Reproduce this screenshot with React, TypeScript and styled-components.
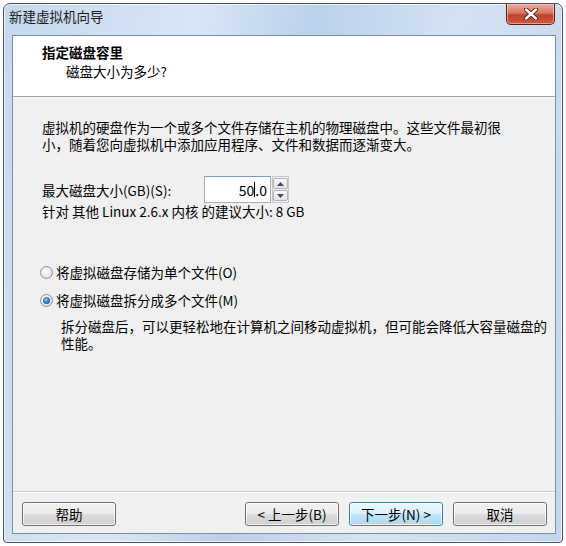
import React from "react";
import styled, { createGlobalStyle } from "styled-components";

const GlobalStyle = createGlobalStyle`
  html, body {
    margin: 0;
    padding: 0;
    background: #ffffff;
  }
  body {
    font-family: "Noto Sans CJK SC", "Liberation Sans", sans-serif;
    font-size: 13.5px;
    color: #000;
  }
`;

const Page = styled.div`
  width: 566px;
  height: 546px;
  padding: 3px;
  box-sizing: border-box;
`;

const Window = styled.div`
  width: 560px;
  height: 540px;
  box-sizing: border-box;
  border: 1px solid #4a5058;
  border-radius: 7px 7px 4px 4px;
  background: linear-gradient(
    100deg,
    #c4d8ee 0%,
    #d9e6f5 30%,
    #bcd0ea 48%,
    #d4e2f3 70%,
    #c2d6ee 100%
  );
  box-shadow: inset 0 0 0 1px rgba(255, 255, 255, 0.7);
  display: flex;
  flex-direction: column;
  padding: 0 6px 8px 8px;
`;

const TitleBar = styled.div`
  height: 31px;
  display: flex;
  align-items: flex-start;
  justify-content: space-between;
`;

const TitleText = styled.div`
  padding-top: 3px;
  margin-left: -3px;
  line-height: 18px;
  font-size: 13.5px;
  color: #1a1a1a;
`;

const CloseButton = styled.div`
  width: 49px;
  height: 21px;
  margin-right: 1px;
  box-sizing: border-box;
  border: 1px solid #5c1f17;
  border-top: none;
  border-radius: 0 0 5px 5px;
  background: linear-gradient(
    180deg,
    #e9a99b 0%,
    #d97764 45%,
    #c0402c 55%,
    #cc5a3e 100%
  );
  box-shadow: inset 0 0 0 1px rgba(255, 220, 210, 0.55);
  display: flex;
  align-items: center;
  justify-content: center;
`;

const Client = styled.div`
  flex: 1;
  display: flex;
  flex-direction: column;
  border: 1px solid #7b8da2;
  background: #f0f0f0;
`;

const Header = styled.div`
  height: 61px;
  box-sizing: border-box;
  background: #ffffff;
  border-bottom: 1px solid #a0a0a0;
  padding: 8px 0 0 29px;
`;

const HeaderTitle = styled.div`
  font-weight: bold;
  line-height: 17px;
`;

const HeaderSub = styled.div`
  margin-top: 2px;
  padding-left: 24px;
  line-height: 17px;
`;

const Body = styled.div`
  flex: 1;
  padding: 21px 0 0 29px;
  border-top: 1px solid #ffffff;
`;

const Paragraph = styled.div`
  line-height: 17px;
  white-space: nowrap;
`;

const SizeRow = styled.div`
  margin-top: 23px;
  display: flex;
  align-items: center;
  height: 27px;
`;

const Label = styled.div`
  width: 162px;
`;

const SpinBox = styled.div`
  display: flex;
  height: 27px;
`;

const SpinInput = styled.div`
  width: 67px;
  box-sizing: border-box;
  border: 1px solid #abadb3;
  border-top-color: #7d9ac0;
  background: #ffffff;
  display: flex;
  align-items: center;
  justify-content: flex-end;
  padding-right: 3px;
  font-size: 14px;
`;

const Caret = styled.span`
  display: inline-block;
  width: 1px;
  height: 15px;
  background: #000;
  vertical-align: middle;
`;

const SpinButtons = styled.div`
  width: 17px;
  margin-left: 1px;
  display: flex;
  flex-direction: column;
  gap: 1px;
  padding: 1px 0;
  box-sizing: border-box;
  border: 1px solid #c9c9c9;
  background: #f0f0f0;
`;

const SpinButton = styled.div`
  flex: 1;
  border: 1px solid #b5b5b5;
  border-radius: 2px;
  background: linear-gradient(180deg, #f8f8f8 0%, #e6e6e6 100%);
  display: flex;
  align-items: center;
  justify-content: center;
`;

const Hint = styled.div`
  line-height: 17px;
`;

const RadioRow = styled.div<{ $gap: number }>`
  margin-top: ${(p) => p.$gap}px;
  display: flex;
  align-items: center;
  gap: 3px;
  line-height: 17px;
  margin-left: -2px;
`;

const RadioCircle = styled.span<{ $checked?: boolean }>`
  width: 13px;
  height: 13px;
  box-sizing: border-box;
  border-radius: 50%;
  border: 1px solid #8f8f8f;
  background: radial-gradient(circle at 40% 35%, #ffffff 0%, #e2e2e2 70%, #cfcfcf 100%);
  display: flex;
  align-items: center;
  justify-content: center;

  &::after {
    content: "";
    display: ${(p) => (p.$checked ? "block" : "none")};
    width: 7px;
    height: 7px;
    border-radius: 50%;
    background: radial-gradient(circle at 45% 40%, #8fd0ff 0%, #2f7fd1 45%, #0c3f84 100%);
  }
`;

const RadioNote = styled.div`
  margin-top: 9px;
  padding-left: 19px;
  line-height: 17px;
  white-space: nowrap;
`;

const Footer = styled.div`
  border-top: 1px solid #c8c8c8;
  box-shadow: inset 0 1px 0 #ffffff;
  padding: 10px 8px 7px 9px;
  display: flex;
  align-items: center;
`;

const Spacer = styled.div`
  flex: 1;
`;

const Button = styled.button<{ $default?: boolean }>`
  width: 94px;
  height: 24px;
  box-sizing: border-box;
  margin-left: ${(p) => (p.$default ? "10px" : "0")};
  font-family: inherit;
  font-size: 13.5px;
  color: #000;
  border-radius: 3px;
  border: 1px solid ${(p) => (p.$default ? "#3c7fb1" : "#707070")};
  background: ${(p) =>
    p.$default
      ? "linear-gradient(180deg, #eaf6fd 0%, #d9f0fc 50%, #bee6fd 51%, #a7d9f5 100%)"
      : "linear-gradient(180deg, #f2f2f2 0%, #ebebeb 50%, #dddddd 51%, #cfcfcf 100%)"};
  box-shadow: inset 0 0 0 1px rgba(255, 255, 255, 0.75);
  padding: 0;
  line-height: 20px;
`;

const ButtonGap = styled.div<{ $w: number }>`
  width: ${(p) => p.$w}px;
`;

const CloseIcon = () => (
  <svg width="14" height="12" viewBox="0 0 14 12">
    <path
      d="M2 1.5 L12 10.5 M12 1.5 L2 10.5"
      stroke="#4a1410"
      strokeWidth="4.2"
      strokeLinecap="round"
    />
    <path
      d="M2 1.5 L12 10.5 M12 1.5 L2 10.5"
      stroke="#ffffff"
      strokeWidth="2.4"
      strokeLinecap="round"
    />
  </svg>
);

const Arrow = ({ up }: { up?: boolean }) => (
  <svg width="7" height="4" viewBox="0 0 7 4">
    <path d={up ? "M0 4 L3.5 0 L7 4 Z" : "M0 0 L3.5 4 L7 0 Z"} fill="#3b4d68" />
  </svg>
);

const App: React.FC = () => {
  return (
    <Page>
      <GlobalStyle />
      <Window>
        <TitleBar>
          <TitleText>新建虚拟机向导</TitleText>
          <CloseButton>
            <CloseIcon />
          </CloseButton>
        </TitleBar>
        <Client>
          <Header>
            <HeaderTitle>指定磁盘容里</HeaderTitle>
            <HeaderSub>磁盘大小为多少?</HeaderSub>
          </Header>
          <Body>
            <Paragraph>
              虚拟机的硬盘作为一个或多个文件存储在主机的物理磁盘中。这些文件最初很
              <br />
              小，随着您向虚拟机中添加应用程序、文件和数据而逐渐变大。
            </Paragraph>
            <SizeRow>
              <Label>最大磁盘大小(GB)(S):</Label>
              <SpinBox>
                <SpinInput>
                  50
                  <Caret />
                  .0
                </SpinInput>
                <SpinButtons>
                  <SpinButton>
                    <Arrow up />
                  </SpinButton>
                  <SpinButton>
                    <Arrow />
                  </SpinButton>
                </SpinButtons>
              </SpinBox>
            </SizeRow>
            <Hint>针对 其他 Linux 2.6.x 内核 的建议大小: 8 GB</Hint>
            <RadioRow $gap={44}>
              <RadioCircle />
              将虚拟磁盘存储为单个文件(O)
            </RadioRow>
            <RadioRow $gap={11}>
              <RadioCircle $checked />
              将虚拟磁盘拆分成多个文件(M)
            </RadioRow>
            <RadioNote>
              拆分磁盘后，可以更轻松地在计算机之间移动虚拟机，但可能会降低大容量磁盘的
              <br />
              性能。
            </RadioNote>
          </Body>
          <Footer>
            <Button>帮助</Button>
            <Spacer />
            <Button>&lt; 上一步(B)</Button>
            <Button $default>下一步(N) &gt;</Button>
            <ButtonGap $w={10} />
            <Button>取消</Button>
          </Footer>
        </Client>
      </Window>
    </Page>
  );
};

export default App;
